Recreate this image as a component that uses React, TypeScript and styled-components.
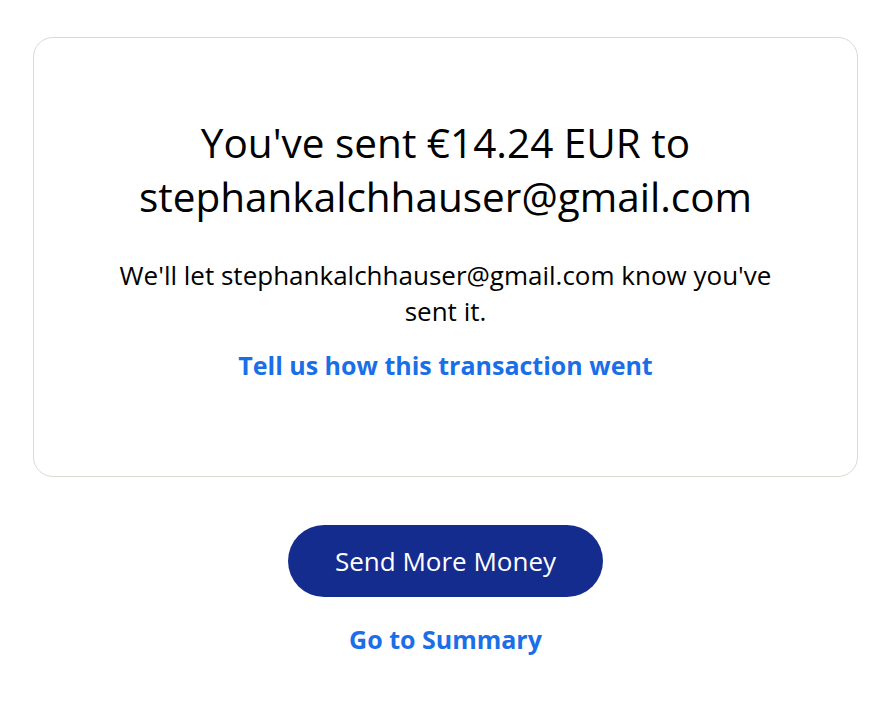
import React from 'react'
import styled, { createGlobalStyle } from 'styled-components'

const GlobalStyle = createGlobalStyle`
  body {
    margin: 0;
    background: #ffffff;
    font-family: "Open Sans", "Noto Sans", sans-serif;
    color: #000000;
  }
`

const Page = styled.main`
  width: 825px;
  margin: 0 auto;
  padding: 37px 0 0 0;
  display: flex;
  flex-direction: column;
  align-items: center;
  transform: translateX(3px);
`

const Card = styled.section`
  box-sizing: border-box;
  width: 825px;
  height: 440px;
  border: 1px solid #dcd9d2;
  border-radius: 20px;
  display: flex;
  flex-direction: column;
  align-items: center;
  padding: 78px 40px 0 40px;
`

const Title = styled.h1`
  font-size: 40.5px;
  font-weight: 400;
  line-height: 54px;
  text-align: center;
  margin: 0;
`

const Message = styled.p`
  font-size: 26px;
  line-height: 36px;
  text-align: center;
  width: 680px;
  margin: 33px 0 0 0;
`

const TextLink = styled.a<{ $size: number }>`
  font-size: ${(p) => p.$size}px;
  font-weight: 700;
  line-height: 34px;
  color: #1a6fe8;
  text-decoration: none;
  cursor: pointer;
`

const FeedbackRow = styled.div`
  margin-top: 19px;
`

const PrimaryButton = styled.button`
  margin-top: 48px;
  width: 315px;
  height: 72px;
  border: none;
  border-radius: 36px;
  background: #142c8e;
  color: #ffffff;
  font-family: inherit;
  font-size: 26px;
  cursor: pointer;
`

const SummaryRow = styled.div`
  margin-top: 25px;
`

const App: React.FC = () => {
  return (
    <>
      <GlobalStyle />
      <Page>
        <Card>
          <Title>
            You've sent €14.24 EUR to
            <br />
            stephankalchhauser@gmail.com
          </Title>
          <Message>We'll let stephankalchhauser@gmail.com know you've sent it.</Message>
          <FeedbackRow>
            <TextLink $size={25}>Tell us how this transaction went</TextLink>
          </FeedbackRow>
        </Card>
        <PrimaryButton>Send More Money</PrimaryButton>
        <SummaryRow>
          <TextLink $size={25}>Go to Summary</TextLink>
        </SummaryRow>
      </Page>
    </>
  )
}

export default App
